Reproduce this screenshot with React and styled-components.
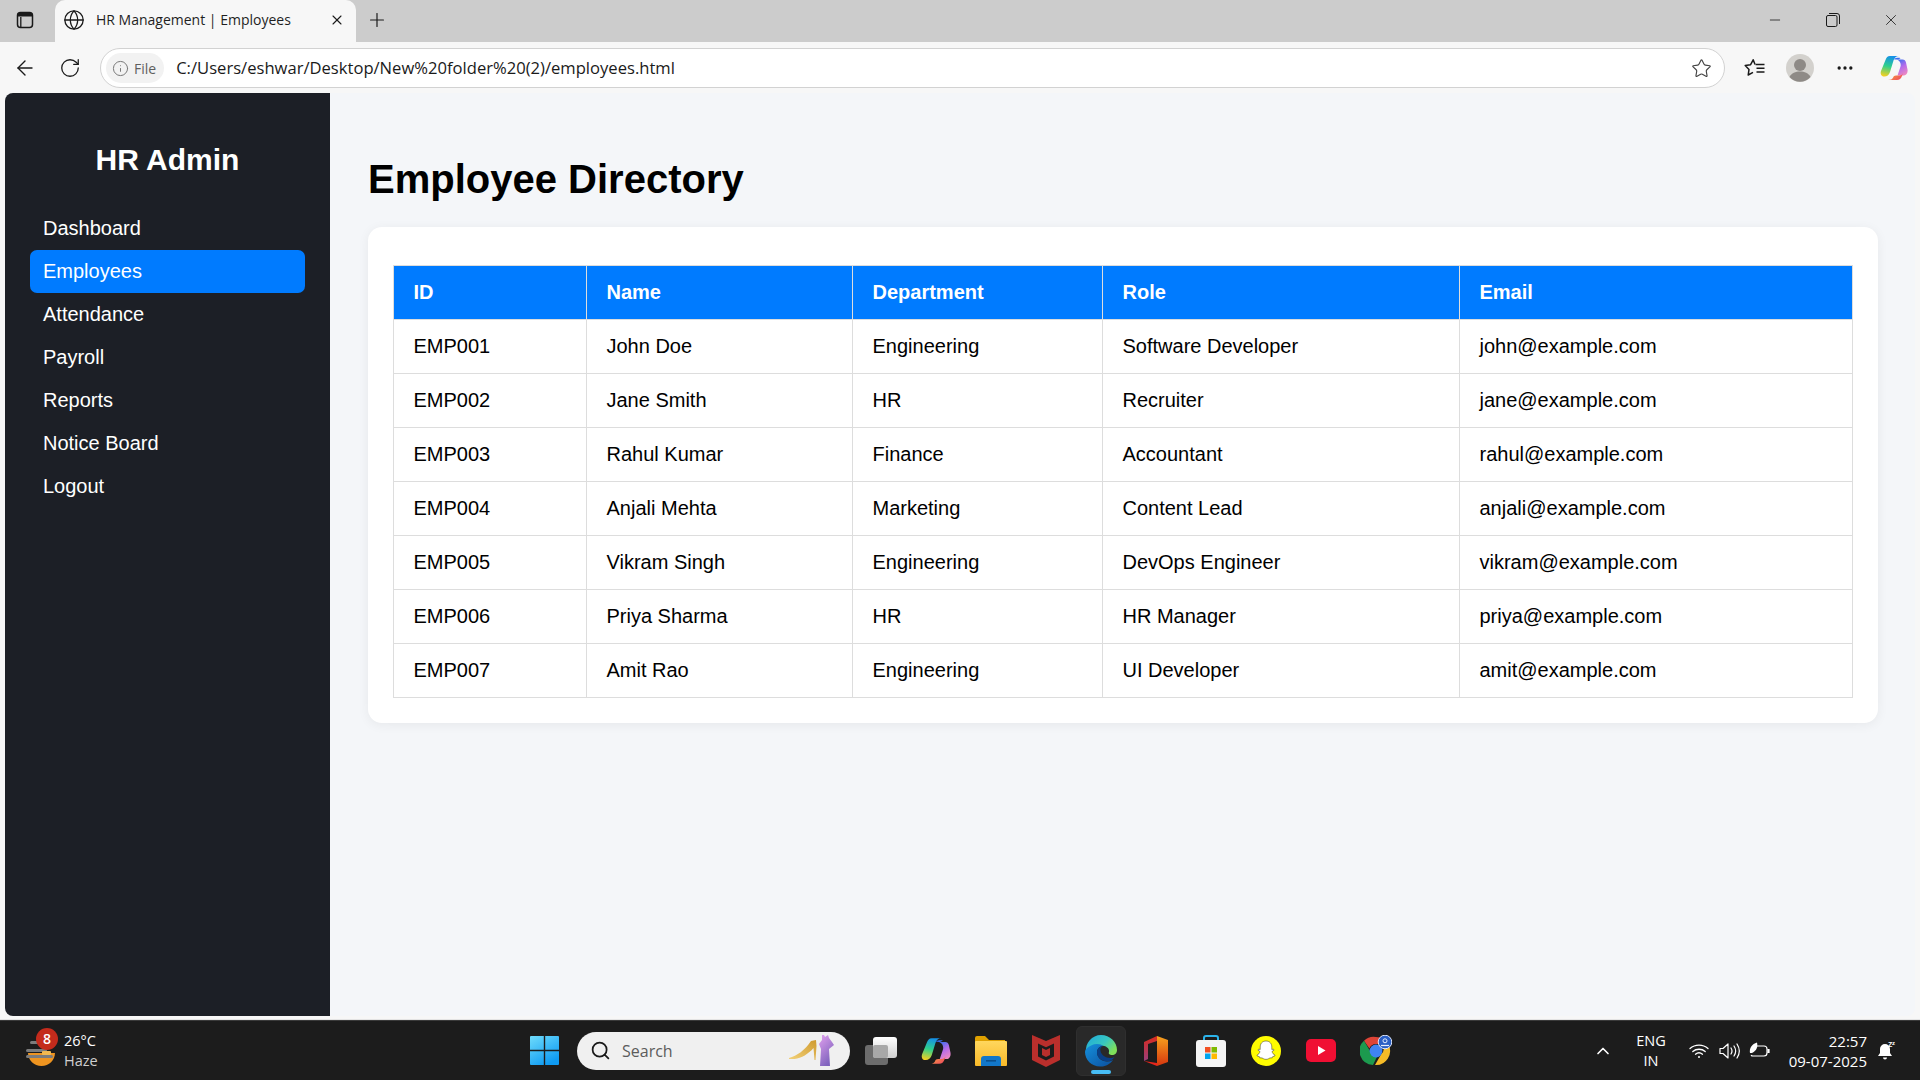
import React from "react";
import styled, { createGlobalStyle } from "styled-components";
import { ArrowLeft, Globe, Minus, MoreHorizontal, Plus, RotateCw, Search, Star, X, ChevronUp, Info } from "lucide-react";

const GlobalStyle = createGlobalStyle`
  html, body { margin: 0; padding: 0; background: #f7f7f7; }
  * { box-sizing: border-box; }
  #root { width: 1920px; height: 1080px; overflow: hidden; }
`;

const Screen = styled.div`
  width: 1920px;
  height: 1080px;
  display: flex;
  flex-direction: column;
  font-family: "Liberation Sans", Arial, sans-serif;
  background: #f7f7f7;
`;

const TabStrip = styled.div`
  height: 42px;
  background: #cccccc;
  display: flex;
  align-items: stretch;
  flex: none;
`;

const TabAction = styled.div`
  width: 55px;
  padding: 0 5px 2px 0;
  display: flex;
  align-items: center;
  justify-content: center;
`;

const Tab = styled.div`
  width: 301px;
  background: #f7f7f7;
  border-radius: 10px 10px 0 0;
  display: flex;
  align-items: center;
  padding: 0 11px 3px 8px;
  gap: 11px;
  font-family: "Open Sans", sans-serif;
  font-size: 14px;
  color: #1f1f1f;
  white-space: nowrap;
`;

const TabTitle = styled.span`
  flex: 1;
`;

const NewTab = styled.div`
  width: 42px;
  padding-bottom: 2px;
  display: flex;
  align-items: center;
  justify-content: center;
`;

const WindowControls = styled.div`
  margin-left: auto;
  display: flex;
  align-items: center;
`;

const WindowButton = styled.div`
  width: 58px;
  padding-bottom: 2px;
  display: flex;
  align-items: center;
  justify-content: center;
  color: #1a1a1a;
`;

const Toolbar = styled.div`
  height: 51px;
  flex: none;
  display: flex;
  align-items: center;
  padding: 1px 0 0;
  background: #f7f7f7;
`;

const ToolButton = styled.div`
  width: ${(p) => p.$w || 45}px;
  display: flex;
  align-items: center;
  justify-content: center;
  color: #1a1a1a;
`;

const AddressBar = styled.div`
  width: 1625px;
  height: 40px;
  margin: 0 7px 0 10px;
  background: #fff;
  border: 1px solid #d2d2d2;
  border-radius: 20px;
  display: flex;
  align-items: center;
  padding: 0 12px 0 5px;
`;

const FilePill = styled.div`
  height: 30px;
  padding: 0 8px 0 6px;
  border-radius: 15px;
  background: #f2f2f2;
  display: flex;
  align-items: center;
  gap: 5px;
  color: #5f5f5f;
  font-family: "Open Sans", sans-serif;
  font-size: 14px;
`;

const Url = styled.span`
  margin-left: 12px;
  padding-bottom: 2px;
  flex: 1;
  font-family: "Open Sans", sans-serif;
  font-size: 16.6px;
  color: #1a1a1a;
`;

const PageFrame = styled.div`
  height: 927px;
  flex: none;
  padding: 0 5px 3px 5px;
  display: flex;
  border-bottom: 1px solid #e4e4e4;
`;

const Sidebar = styled.aside`
  width: 325px;
  background: #1c1f26;
  color: #fff;
  border-radius: 8px 0 0 8px;
  padding: 0 25px;
  display: flex;
  flex-direction: column;
`;

const Logo = styled.h2`
  margin: 50px 0 30px;
  font-size: 30px;
  line-height: 34px;
  font-weight: 700;
  text-align: center;
`;

const NavList = styled.nav`
  display: flex;
  flex-direction: column;
`;

const NavItem = styled.a`
  height: 43px;
  line-height: 43px;
  padding-left: 13px;
  font-size: 20px;
  color: #fff;
  border-radius: 7px;
  background: ${(p) => (p.$active ? "#007bff" : "transparent")};
`;

const Main = styled.main`
  flex: 1;
  background: #f4f6f9;
  border-radius: 0 8px 8px 0;
  padding: 0 37px 0 38px;
`;

const Title = styled.h1`
  margin: 0;
  padding-top: 63px;
  height: 134px;
  font-size: 40px;
  line-height: 46px;
  font-weight: 700;
  color: #000;
`;

const Card = styled.section`
  background: #fff;
  border-radius: 14px;
  padding: 38px 25px 25px;
  box-shadow: 0 2px 12px rgba(0, 0, 0, 0.06);
`;

const Table = styled.table`
  width: 100%;
  table-layout: fixed;
  border-collapse: collapse;
  font-size: 20px;
  color: #000;
`;

const Th = styled.th`
  width: ${(p) => p.$w}px;
  height: 54px;
  padding: 0 19.5px;
  text-align: left;
  font-weight: 700;
  color: #fff;
  background: #007bff;
  border: 1px solid #dddddd;
`;

const Td = styled.td`
  height: 54px;
  padding: 0 19.5px;
  border: 1px solid #dddddd;
`;

const Taskbar = styled.footer`
  height: 60px;
  flex: none;
  background: #1c1c1c;
  border-top: 1px solid #3a3a3a;
  display: grid;
  grid-template-columns: 526px auto 1fr;
  align-items: center;
  color: #fff;
  font-family: "Open Sans", sans-serif;
`;

const Weather = styled.div`
  display: flex;
  align-items: center;
  padding-left: 23px;
  gap: 7px;
`;

const WeatherIcon = styled.div`
  position: relative;
  width: 34px;
  height: 42px;
`;

const Badge = styled.span`
  position: absolute;
  top: -2px;
  right: -1px;
  width: 22px;
  height: 22px;
  border-radius: 50%;
  background: #c42b1c;
  color: #fff;
  font-size: 14px;
  font-weight: 600;
  text-align: center;
  line-height: 22px;
`;

const WeatherText = styled.div`
  font-size: 14.5px;
  line-height: 20px;
`;

const WeatherSub = styled.div`
  color: #cfcfcf;
`;

const Center = styled.div`
  display: flex;
  align-items: center;
`;

const StartButton = styled.div`
  width: 51px;
  padding-left: 4px;
  display: flex;
  justify-content: flex-start;
`;

const SearchBox = styled.div`
  width: 273px;
  height: 38px;
  border-radius: 19px;
  background: #f0f0f0;
  color: #5c5c5c;
  display: flex;
  align-items: center;
  padding: 0 14px 0 13px;
  gap: 11px;
  font-size: 16px;
  margin-right: 6px;
`;

const SearchLabel = styled.span`
  flex: 1;
`;

const AppIcon = styled.div`
  position: relative;
  width: 50px;
  height: 50px;
  margin-right: 5px;
  display: flex;
  align-items: center;
  justify-content: center;
  border-radius: 6px;
  background: ${(p) => (p.$active ? "#292929" : "transparent")};
  border: 1px solid ${(p) => (p.$active ? "#2f2f2f" : "transparent")};
`;

const ActiveDot = styled.span`
  position: absolute;
  bottom: 1px;
  left: 14px;
  width: 20px;
  height: 4px;
  border-radius: 2px;
  background: #47bdf5;
`;

const Tray = styled.div`
  display: flex;
  align-items: center;
  justify-content: flex-end;
  height: 100%;
  padding-right: 13px;
`;

const TrayIcon = styled.div`
  width: ${(p) => p.$w || 30}px;
  display: flex;
  justify-content: center;
`;

const TrayText = styled.div`
  font-size: ${(p) => p.$size || 14.5}px;
  line-height: 20px;
  text-align: ${(p) => p.$align || "center"};
  width: ${(p) => p.$w}px;
`;

const links = ["Dashboard", "Employees", "Attendance", "Payroll", "Reports", "Notice Board", "Logout"];

const columns = [
  ["ID", 193],
  ["Name", 266],
  ["Department", 250],
  ["Role", 357],
  ["Email", 393],
];

const employees = [
  ["EMP001", "John Doe", "Engineering", "Software Developer", "john@example.com"],
  ["EMP002", "Jane Smith", "HR", "Recruiter", "jane@example.com"],
  ["EMP003", "Rahul Kumar", "Finance", "Accountant", "rahul@example.com"],
  ["EMP004", "Anjali Mehta", "Marketing", "Content Lead", "anjali@example.com"],
  ["EMP005", "Vikram Singh", "Engineering", "DevOps Engineer", "vikram@example.com"],
  ["EMP006", "Priya Sharma", "HR", "HR Manager", "priya@example.com"],
  ["EMP007", "Amit Rao", "Engineering", "UI Developer", "amit@example.com"],
];

const TabsIcon = () => (
  <svg width="18" height="18" viewBox="0 0 18 18" fill="none">
    <rect x="1.5" y="1.5" width="15" height="15" rx="3" stroke="#1a1a1a" strokeWidth="1.5" />
    <path d="M1.5 5.5V4.5a3 3 0 0 1 3-3h9a3 3 0 0 1 3 3v1z" fill="#1a1a1a" />
    <path d="M4.8 6v10" stroke="#1a1a1a" strokeWidth="1.3" />
  </svg>
);

const RestoreIcon = () => (
  <svg width="14" height="14" viewBox="0 0 14 14" fill="none" stroke="#1a1a1a" strokeWidth="1">
    <rect x="0.5" y="2.5" width="10.5" height="11" rx="1.5" />
    <path d="M3 0.5h8a2.5 2.5 0 0 1 2.5 2.5v8" />
  </svg>
);

const FavoritesIcon = () => (
  <svg width="22" height="20" viewBox="0 0 22 20" fill="none" stroke="#1a1a1a" strokeWidth="1.5" strokeLinejoin="round">
    <path d="M11 6.5 9.2 1.8 6.6 6.7 1.2 7.5 5 11.4 4.2 17 9 14.3" />
    <path d="M11.5 6.5h9M12.5 10.2h8M12.5 14h8" />
  </svg>
);

const Avatar = () => (
  <svg width="28" height="28" viewBox="0 0 28 28">
    <circle cx="14" cy="14" r="14" fill="#d3d1cd" />
    <circle cx="14" cy="11" r="6" fill="#8e8a86" />
    <path d="M3.5 23c2-4 6-5.5 10.5-5.5S22.500 19 24.500 23A14 14 0 0 1 3.500 23z" fill="#8e8a86" />
  </svg>
);

const CopilotIcon = ({ id, size = 28 }) => (
  <svg width={size} height={size} viewBox="0 0 28 28">
    <defs>
      <linearGradient id={`${id}a`} x1="0.5" y1="0" x2="0.3" y2="1">
        <stop offset="0" stopColor="#1590e8" />
        <stop offset="0.5" stopColor="#2fd08c" />
        <stop offset="1" stopColor="#f5d020" />
      </linearGradient>
      <linearGradient id={`${id}b`} x1="0.3" y1="0" x2="0.7" y2="1">
        <stop offset="0" stopColor="#4a6ff0" />
        <stop offset="0.45" stopColor="#b56bea" />
        <stop offset="1" stopColor="#f08ac0" />
      </linearGradient>
      <linearGradient id={`${id}c`} x1="0" y1="0" x2="1" y2="0.6">
        <stop offset="0" stopColor="#f7b23a" />
        <stop offset="1" stopColor="#f0505c" />
      </linearGradient>
    </defs>
    <path d="M10 2h9c-3 0-4.500 1.500-5.500 4.500L10 18c-1 3-3 4.500-5.500 4.500H4c-2.500 0-4-2.500-3-5.500L5.500 6C6.500 3.500 7.500 2 10 2z" fill={`url(#${id}a)`} />
    <path d="M17 5.500h5.500c2 0 3 1 3.500 3l1.500 7c.6 3-1 6-3.500 6h-6.500l3-9c.8-2.500-.5-6-3.500-7z" fill={`url(#${id}b)`} />
    <path d="M8 26h9c2.500 0 4-1.500 5-4l1-3c-.8 1.800-2.200 2.500-3.500 2.500H16c-1.500 0-2.500.8-3 2.200C12 25 11 26 8 26z" fill={`url(#${id}c)`} />
    <path d="M13 5C16 4 19 3.500 20.500 4.200 19 5 18.500 5.500 17.500 5.500 16 5.500 14.500 5.500 13 5z" fill="#3a6ff0" />
  </svg>
);

const WeatherArt = () => (
  <svg width="34" height="42" viewBox="0 0 34 42">
    <path d="M5 23h27c0 7-6 13-13.500 13S5 30 5 23z" fill="#ee9420" />
    <rect x="7" y="11" width="10" height="3" rx="1.500" fill="#7c7c7c" />
    <rect x="3" y="19" width="21" height="3" rx="1.500" fill="#7c7c7c" />
    <rect x="19" y="21" width="9" height="4" rx="1" fill="#f2b950" />
    <rect x="3" y="25" width="27" height="3" rx="1.500" fill="#7c7c7c" />
  </svg>
);

const WindowsLogo = () => (
  <svg width="29" height="29" viewBox="0 0 29 29">
    <defs>
      <linearGradient id="win" x1="0" y1="0" x2="0.6" y2="1">
        <stop offset="0" stopColor="#6fdcfb" />
        <stop offset="1" stopColor="#0f9bf2" />
      </linearGradient>
    </defs>
    <path d="M1 0h12.800v13.800H0V1a1 1 0 0 1 1-1zM15.200 0H28a1 1 0 0 1 1 1v12.800H15.200zM0 15.200h13.800V29H1a1 1 0 0 1-1-1zM15.200 15.200H29V28a1 1 0 0 1-1 1H15.200z" fill="url(#win)" />
  </svg>
);

const SearchArt = () => (
  <svg width="47" height="32" viewBox="0 0 47 32">
    <defs>
      <linearGradient id="heel" x1="0" y1="1" x2="1" y2="0">
        <stop offset="0" stopColor="#f3d27a" />
        <stop offset="1" stopColor="#cf9a2e" />
      </linearGradient>
      <linearGradient id="dress" x1="0" y1="0" x2="0.5" y2="1">
        <stop offset="0" stopColor="#e0a0ee" />
        <stop offset="1" stopColor="#7f63bd" />
      </linearGradient>
    </defs>
    <path d="M0 23C8 21 16 15 22 6l5-1 .5 6-1 14h-1l-1-12c-5 6-12 10-19 11H0z" fill="url(#heel)" />
    <path d="M33 0h2l1 2 3-2 1 3 3 4 2 3-5 4 1 17H31l1-17-2-5 3-4z" fill="url(#dress)" />
  </svg>
);

const TaskViewIcon = () => (
  <svg width="32" height="30" viewBox="0 0 32 30">
    <defs>
      <linearGradient id="tvb" x1="0" y1="0" x2="0" y2="1">
        <stop offset="0" stopColor="#ffffff" />
        <stop offset="1" stopColor="#cfcfcf" />
      </linearGradient>
    </defs>
    <rect x="0" y="9" width="23" height="20" rx="3" fill="#6c6c6c" />
    <rect x="8" y="1" width="24" height="21" rx="3" fill="url(#tvb)" />
    <rect x="8" y="9" width="15" height="13" rx="2" fill="#a8a8a8" />
  </svg>
);

const FolderIcon = () => (
  <svg width="32" height="30" viewBox="0 0 32 30">
    <defs>
      <linearGradient id="fld" x1="0" y1="0" x2="0" y2="1">
        <stop offset="0" stopColor="#ffd75e" />
        <stop offset="1" stopColor="#f9b928" />
      </linearGradient>
    </defs>
    <path d="M0 2a2 2 0 0 1 2-2h8l4 4h16v6H0z" fill="#e0a100" />
    <rect x="0" y="5" width="32" height="25" rx="1" fill="url(#fld)" />
    <path d="M6 30v-7a3 3 0 0 1 3-3h14a3 3 0 0 1 3 3v7z" fill="#1277c9" />
    <rect x="11" y="24" width="10" height="1.600" fill="#0a4f8c" />
  </svg>
);

const McAfeeIcon = () => (
  <svg width="28" height="32" viewBox="0 0 28 32">
    <path d="M0 0 14 6 28 0v25l-14 7-14-7z" fill="#bb2f2c" />
    <path d="M6 8.500v13l8 4 8-4v-13l-8 3.800z" fill="#1c1c1c" />
    <path d="M10 13l4 2 4-2v7l-4 2-4-2z" fill="#bb2f2c" />
  </svg>
);

const EdgeIcon = () => (
  <svg width="32" height="32" viewBox="0 0 32 32">
    <defs>
      <linearGradient id="edgeA" x1="0" y1="0" x2="1" y2="0.6">
        <stop offset="0" stopColor="#1fa8dc" />
        <stop offset="0.6" stopColor="#37c6c0" />
        <stop offset="1" stopColor="#7fe05a" />
      </linearGradient>
      <linearGradient id="edgeB" x1="0" y1="0" x2="1" y2="1">
        <stop offset="0" stopColor="#1590dc" />
        <stop offset="1" stopColor="#0c4f9e" />
      </linearGradient>
    </defs>
    <path d="M16 0c9 0 16 7 16 15 0 3-2 5-5 5-2 0-4-1-3-3 1-4-4-7-9-6.500C9 11 4 13 1 17 0 8 7 0 16 0z" fill="url(#edgeA)" />
    <path d="M1 14c3-3 7-5 11-5 3 0 5 .8 6 2-3 0-6 2.500-6 6.500 0 5 4.500 9 10 9 2 0 4-.5 6-1.500-3 4-7 6.500-12 6.500C7 32 0 25 0 17c0-1 .4-2 1-3z" fill="url(#edgeB)" />
    <path d="M12 17.500c0-4 3-6.500 6-6.500-2.500 1-3 3-2.500 5 .8 4 5 7 9.500 7 2 0 4-.5 4.500-1-1 1.500-2 2.500-3.500 3.500-2 .6-3.500.8-4.500.8C16 26 12 22 12 17.500z" fill="#0a3f86" />
  </svg>
);

const OfficeIcon = () => (
  <svg width="24" height="30" viewBox="0 0 24 30">
    <defs>
      <linearGradient id="off" x1="0" y1="0" x2="0" y2="1">
        <stop offset="0" stopColor="#f6a21e" />
        <stop offset="1" stopColor="#d5350f" />
      </linearGradient>
      <linearGradient id="offL" x1="0" y1="0" x2="0" y2="1">
        <stop offset="0" stopColor="#d92a1e" />
        <stop offset="1" stopColor="#9a3f7c" />
      </linearGradient>
    </defs>
    <path d="M13 0 0 6v19l4-2V8l9-3z" fill="url(#offL)" />
    <path d="M0 25 13 27v3z" fill="#e8251c" />
    <path d="M13 0 24 4v22l-11 4z" fill="url(#off)" />
  </svg>
);

const StoreIcon = () => (
  <svg width="30" height="32" viewBox="0 0 30 32">
    <path d="M8 6V3a2 2 0 0 1 2-2h10a2 2 0 0 1 2 2v3" fill="none" stroke="#2bb3ea" strokeWidth="2" />
    <rect x="0" y="5" width="30" height="27" rx="3" fill="#f4f4f4" />
    <rect x="9" y="12" width="5.500" height="5.500" fill="#f25022" />
    <rect x="15.500" y="12" width="5.500" height="5.500" fill="#7fba00" />
    <rect x="9" y="18.500" width="5.500" height="5.500" fill="#00a4ef" />
    <rect x="15.500" y="18.500" width="5.500" height="5.500" fill="#ffb900" />
  </svg>
);

const SnapchatIcon = () => (
  <svg width="30" height="30" viewBox="0 0 30 30">
    <circle cx="15" cy="15" r="15" fill="#fffc00" />
    <path d="M15 5c3.800 0 5.800 2.800 5.800 6v2.500l1.700-.4.500 1.100-2 1.300c.4 1.700 1.500 3 3 3.500l-.3 1.100-2 .5-.5 1.300c-1.700-.2-3 .2-4 1-1 .6-3.400.6-4.400 0-1-.8-2.300-1.200-4-1l-.5-1.300-2-.5-.3-1.100c1.500-.5 2.600-1.800 3-3.500l-2-1.300.5-1.100 1.700.4V11c0-3.200 2-6 5.800-6z" fill="#fff" stroke="#2a2a2a" strokeWidth="0.500" />
  </svg>
);

const YoutubeIcon = () => (
  <svg width="30" height="24" viewBox="0 0 30 24">
    <rect x="0" y="0" width="30" height="23" rx="5" fill="#f00f33" />
    <path d="M12 7l7.500 4.500L12 16z" fill="#fff" />
  </svg>
);

const ChromeIcon = () => (
  <svg width="32" height="32" viewBox="0 0 32 32">
    <path d="M16 2a14 14 0 0 1 12.100 7H16a7 7 0 0 0-6.600 4.500L4 5.700A14 14 0 0 1 16 2z" fill="#dd4437" />
    <path d="M28.100 9A14 14 0 0 1 15 30l6-10.500A7 7 0 0 0 21.600 9z" fill="#f5bb27" />
    <path d="M4 5.700l6 10.400a7 7 0 0 0 8 3.600L13 30A14 14 0 0 1 4 5.700z" fill="#1c9a4e" />
    <circle cx="16" cy="16" r="6.400" fill="#3f84f3" />
    <circle cx="25" cy="7" r="6.800" fill="#2a5fc4" stroke="#dfe8fb" strokeWidth="1" />
    <circle cx="25" cy="5.800" r="2" fill="none" stroke="#e8eefc" strokeWidth="1" />
    <path d="M21 10.500h8" stroke="#e8eefc" strokeWidth="1.200" />
  </svg>
);

const WifiIcon = () => (
  <svg width="20" height="16" viewBox="0 0 20 16" fill="none" stroke="#fff" strokeWidth="1.300" strokeLinecap="round">
    <path d="M1 5.500c5-4.500 13-4.500 18 0M3.800 8.500c3.500-3 9-3 12.400 0M6.500 11.200c2-1.700 5-1.700 7 0" />
    <circle cx="10" cy="14" r="1" fill="#fff" stroke="none" />
  </svg>
);

const VolumeIcon = () => (
  <svg width="21" height="18" viewBox="0 0 21 18" fill="none" stroke="#fff" strokeWidth="1.200" strokeLinejoin="round" strokeLinecap="round">
    <path d="M1 6.500h3L9 2v14l-5-4.500H1z" />
    <path d="M12 6c1.200 1.800 1.200 4.200 0 6M15 4c2 3 2 7 0 10M18 2c3 4.500 3 9.500 0 14" />
  </svg>
);

const BatteryLeafIcon = () => (
  <svg width="21" height="18" viewBox="0 0 21 18" fill="none" stroke="#fff" strokeWidth="1.200">
    <path d="M6 4h9a3 3 0 0 1 3 3v4a3 3 0 0 1-3 3H4a3 3 0 0 1-2-.8" />
    <path d="M18.500 7.500h1.500v3h-1.500" fill="#fff" />
    <path d="M1 11C0 6 3 2 8 .5c1 4 0 8-5 10.500z" fill="#fff" stroke="none" />
  </svg>
);

const SleepBellIcon = () => (
  <svg width="18" height="20" viewBox="0 0 18 20">
    <path d="M7 3a5 5 0 0 1 5 5v4l2 3H0l2-3V8a5 5 0 0 1 5-5z" fill="#fff" />
    <path d="M5 16.500h4a2 2 0 0 1-4 0z" fill="#fff" />
    <text x="10" y="6" fontSize="7" fontWeight="700" fill="#fff" fontFamily="Liberation Sans, sans-serif">Z</text>
    <text x="14" y="4" fontSize="6" fontWeight="700" fill="#fff" fontFamily="Liberation Sans, sans-serif">z</text>
  </svg>
);

const App = () => {
  return (
    <Screen>
      <GlobalStyle />
      <TabStrip>
        <TabAction>
          <TabsIcon />
        </TabAction>
        <Tab>
          <Globe size={22} strokeWidth={1.4} color="#1a1a1a" />
          <TabTitle>HR Management | Employees</TabTitle>
          <X size={16} strokeWidth={1.6} color="#1a1a1a" />
        </Tab>
        <NewTab>
          <Plus size={22} strokeWidth={1.3} color="#1a1a1a" />
        </NewTab>
        <WindowControls>
          <WindowButton>
            <Minus size={16} strokeWidth={1.2} />
          </WindowButton>
          <WindowButton>
            <RestoreIcon />
          </WindowButton>
          <WindowButton>
            <X size={18} strokeWidth={1.1} />
          </WindowButton>
        </WindowControls>
      </TabStrip>

      <Toolbar>
        <ToolButton $w={50}>
          <ArrowLeft size={24} strokeWidth={1.4} />
        </ToolButton>
        <ToolButton $w={40}>
          <RotateCw size={22} strokeWidth={1.4} />
        </ToolButton>
        <AddressBar>
          <FilePill>
            <Info size={17} strokeWidth={1.4} color="#777" />
            File
          </FilePill>
          <Url>C:/Users/eshwar/Desktop/New%20folder%20(2)/employees.html</Url>
          <Star size={21} strokeWidth={1.3} color="#444" />
        </AddressBar>
        <ToolButton $w={46}>
          <FavoritesIcon />
        </ToolButton>
        <ToolButton $w={44}>
          <Avatar />
        </ToolButton>
        <ToolButton $w={46}>
          <MoreHorizontal size={20} strokeWidth={2} />
        </ToolButton>
        <ToolButton $w={52}>
          <CopilotIcon id="edgeCopilot" />
        </ToolButton>
      </Toolbar>

      <PageFrame>
        <Sidebar>
          <Logo>HR Admin</Logo>
          <NavList>
            {links.map((l) => (
              <NavItem key={l} $active={l === "Employees"}>
                {l}
              </NavItem>
            ))}
          </NavList>
        </Sidebar>
        <Main>
          <Title>Employee Directory</Title>
          <Card>
            <Table>
              <thead>
                <tr>
                  {columns.map(([label, w]) => (
                    <Th key={label} $w={w}>
                      {label}
                    </Th>
                  ))}
                </tr>
              </thead>
              <tbody>
                {employees.map((e) => (
                  <tr key={e[0]}>
                    {e.map((v) => (
                      <Td key={v}>{v}</Td>
                    ))}
                  </tr>
                ))}
              </tbody>
            </Table>
          </Card>
        </Main>
      </PageFrame>

      <Taskbar>
        <Weather>
          <WeatherIcon>
            <WeatherArt />
            <Badge>8</Badge>
          </WeatherIcon>
          <WeatherText>
            <div>26°C</div>
            <WeatherSub>Haze</WeatherSub>
          </WeatherText>
        </Weather>
        <Center>
          <StartButton>
            <WindowsLogo />
          </StartButton>
          <SearchBox>
            <Search size={21} strokeWidth={2} color="#1a1a1a" />
            <SearchLabel>Search</SearchLabel>
            <SearchArt />
          </SearchBox>
          <AppIcon>
            <TaskViewIcon />
          </AppIcon>
          <AppIcon>
            <CopilotIcon id="barCopilot" size={30} />
          </AppIcon>
          <AppIcon>
            <FolderIcon />
          </AppIcon>
          <AppIcon>
            <McAfeeIcon />
          </AppIcon>
          <AppIcon $active>
            <EdgeIcon />
            <ActiveDot />
          </AppIcon>
          <AppIcon>
            <OfficeIcon />
          </AppIcon>
          <AppIcon>
            <StoreIcon />
          </AppIcon>
          <AppIcon>
            <SnapchatIcon />
          </AppIcon>
          <AppIcon>
            <YoutubeIcon />
          </AppIcon>
          <AppIcon>
            <ChromeIcon />
          </AppIcon>
        </Center>
        <Tray>
          <TrayIcon>
            <ChevronUp size={20} strokeWidth={2} />
          </TrayIcon>
          <TrayText $w={66}>
            <div>ENG</div>
            <div>IN</div>
          </TrayText>
          <TrayIcon>
            <WifiIcon />
          </TrayIcon>
          <TrayIcon>
            <VolumeIcon />
          </TrayIcon>
          <TrayIcon>
            <BatteryLeafIcon />
          </TrayIcon>
          <TrayText $w={93} $align="right" $size={15}>
            <div>22:57</div>
            <div>09-07-2025</div>
          </TrayText>
          <TrayIcon $w={40}>
            <SleepBellIcon />
          </TrayIcon>
        </Tray>
      </Taskbar>
    </Screen>
  );
};

export default App;
